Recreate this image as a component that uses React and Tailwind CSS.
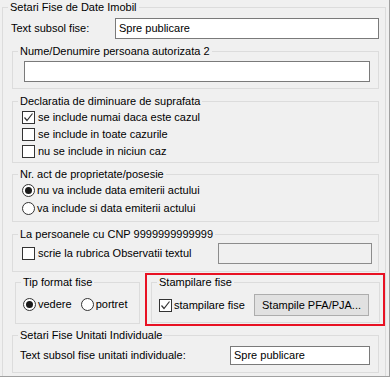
import React from "react";

const GroupBox = ({ title, className, children }) => (
  <fieldset className={"border border-[#dcdcdc] " + className}>
    <legend className="ml-[5px] px-[2px] leading-[14px]">{title}</legend>
    {children}
  </fieldset>
);

const CheckBox = ({ checked }) => (
  <span className="w-[13px] h-[13px] border border-[#333333] bg-white flex items-center justify-center shrink-0">
    {checked && (
      <svg width="11" height="11" viewBox="0 0 11 11">
        <polyline points="1.5,5.5 4,8.5 9.5,1.5" fill="none" stroke="#333333" strokeWidth="1.2" />
      </svg>
    )}
  </span>
);

const Radio = ({ checked }) => (
  <span className="w-[13px] h-[13px] rounded-full border border-[#333333] bg-white flex items-center justify-center shrink-0">
    {checked && <span className="w-[7px] h-[7px] rounded-full bg-[#1a1a1a]"></span>}
  </span>
);

const TextBox = ({ value, className }) => (
  <div className={"border border-[#7a7a7a] bg-white flex items-center px-[3px] " + className}>
    {value}
  </div>
);

export default function App() {
  return (
    <div className="w-[390px] h-[377px] bg-[#f0f0f0] border-r border-b border-[#a0a0a0] font-['Liberation_Sans',Arial,sans-serif] text-[11px] text-black overflow-hidden">
      <GroupBox title="Setari Fise de Date Imobil" className="ml-[2px] w-[384px] pb-[4px]">
        {/* subsol */}
        <div className="mt-[4px] flex items-center h-[21px] pl-[8px]">
          <span className="w-[104px]">Text subsol fise:</span>
          <TextBox value="Spre publicare" className="w-[264px] h-[21px]" />
        </div>

        <GroupBox title="Nume/Denumire persoana autorizata 2" className="mt-[5px] ml-[9px] w-[367px] pb-[6px]">
          <TextBox value="" className="mt-[3px] ml-[11px] w-[346px] h-[21px]" />
        </GroupBox>

        <GroupBox title="Declaratia de diminuare de suprafata" className="mt-[5px] ml-[9px] w-[367px] pb-[2px]">
          <div className="mt-[1px] pl-[9px]">
            <div className="flex items-center gap-[3px] h-[17px]">
              <CheckBox checked />
              <span>se include numai daca este cazul</span>
            </div>
            <div className="flex items-center gap-[3px] h-[17px]">
              <CheckBox />
              <span>se include in toate cazurile</span>
            </div>
            <div className="flex items-center gap-[3px] h-[17px]">
              <CheckBox />
              <span>nu se include in niciun caz</span>
            </div>
          </div>
        </GroupBox>

        <GroupBox title="Nr. act de proprietate/posesie" className="mt-[4px] ml-[9px] w-[367px] pb-[4px]">
          <div className="pl-[9px]">
            <div className="flex items-center gap-[2px] h-[18px]">
              <Radio checked />
              <span>nu va include data emiterii actului</span>
            </div>
            <div className="flex items-center gap-[2px] h-[18px]">
              <Radio />
              <span>va include si data emiterii actului</span>
            </div>
          </div>
        </GroupBox>

        <GroupBox title="La persoanele cu CNP 9999999999999" className="mt-[5px] ml-[9px] w-[367px] pb-[7px]">
          <div className="mt-[2px] pl-[9px] flex items-center h-[21px]">
            <CheckBox />
            <span className="ml-[3px] w-[180px]">scrie la rubrica Observatii textul</span>
            <div className="w-[154px] h-[21px] border border-[#8c8c8c] bg-[#f0f0f0]"></div>
          </div>
        </GroupBox>

        {/* tip format + stampilare */}
        <div className="mt-[1px] flex items-start">
          <GroupBox title="Tip format fise" className="mt-[2px] ml-[12px] w-[125px] h-[49px]">
            <div className="mt-[6px] pl-[7px] flex items-center h-[18px]">
              <Radio checked />
              <span className="ml-[2px]">vedere</span>
              <span className="ml-[9px]"><Radio /></span>
              <span className="ml-[2px]">portret</span>
            </div>
          </GroupBox>
          <div className="ml-[5px] w-[240px] h-[53px] border-2 border-[#e81123]">
            <GroupBox title="Stampilare fise" className="ml-[4px] w-[229px] h-[48px]">
              <div className="mt-[5px] pl-[7px] flex items-center h-[22px]">
                <CheckBox checked />
                <span className="ml-[2px] w-[80px]">stampilare fise</span>
                <button className="w-[115px] h-[22px] bg-[#e1e1e1] border border-[#adadad] text-left pl-[7px]">
                  Stampile PFA/PJA...
                </button>
              </div>
            </GroupBox>
          </div>
        </div>

        <GroupBox title="Setari Fise Unitati Individuale" className="mt-[2px] ml-[9px] w-[367px] pb-[7px]">
          <div className="mt-[4px] pl-[7px] flex items-center h-[19px]">
            <span className="w-[210px]">Text subsol fise unitati individuale:</span>
            <TextBox value="Spre publicare" className="w-[140px] h-[19px]" />
          </div>
        </GroupBox>
      </GroupBox>
    </div>
  );
}
